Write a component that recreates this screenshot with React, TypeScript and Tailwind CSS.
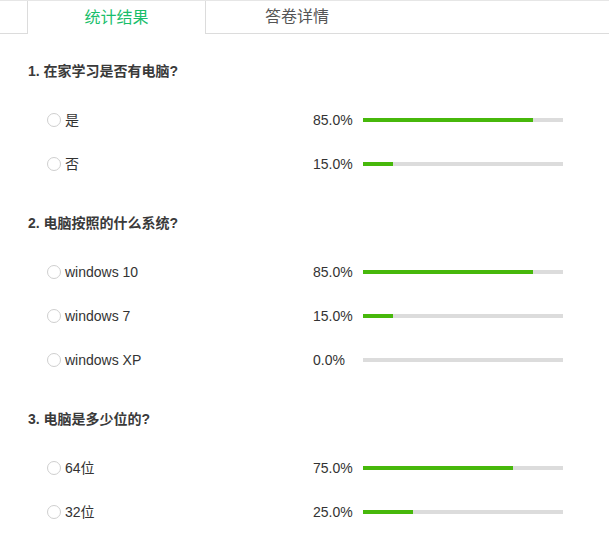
import React, { useState } from 'react';

interface Option {
  label: string;
  percent: number;
}

interface Question {
  title: string;
  options: Option[];
}

const questions: Question[] = [
  {
    title: '1. 在家学习是否有电脑?',
    options: [
      { label: '是', percent: 85 },
      { label: '否', percent: 15 },
    ],
  },
  {
    title: '2. 电脑按照的什么系统?',
    options: [
      { label: 'windows 10', percent: 85 },
      { label: 'windows 7', percent: 15 },
      { label: 'windows XP', percent: 0 },
    ],
  },
  {
    title: '3. 电脑是多少位的?',
    options: [
      { label: '64位', percent: 75 },
      { label: '32位', percent: 25 },
    ],
  },
];

const OptionRow: React.FC<{ option: Option }> = ({ option }) => (
  <div className="flex items-center h-[44px]">
    <div className="flex items-center w-[313px] pl-[47px]">
      <span className="w-[14px] h-[14px] rounded-full border border-[#cfcfcf] bg-white flex-shrink-0"></span>
      <span className="ml-[4px] text-[14px] text-[#333]">{option.label}</span>
    </div>
    <div className="w-[50px] text-[14px] text-[#333]">{option.percent.toFixed(1)}%</div>
    <div className="w-[200px] h-[4px] bg-[#dcdcdc]">
      <div className="h-full bg-[#47b80b]" style={{ width: `${option.percent}%` }}></div>
    </div>
  </div>
);

export default function App() {
  const [tab, setTab] = useState(0);

  return (
    <div
      className="w-[609px] h-[553px] bg-white overflow-hidden"
      style={{ fontFamily: '"Liberation Sans", "Noto Sans CJK SC", sans-serif' }}
    >
      <div className="flex border-t border-[#e6e6e6] h-[34px]">
        <div className="w-[27px] border-b border-[#dcdcdc]"></div>
        <button
          onClick={() => setTab(0)}
          className={`w-[179px] text-[16px] border-l border-r border-[#dcdcdc] ${
            tab === 0 ? 'text-[#19be6b]' : 'text-[#555] border-b'
          }`}
        >
          统计结果
        </button>
        <button
          onClick={() => setTab(1)}
          className={`w-[182px] text-[16px] border-[#dcdcdc] ${
            tab === 1 ? 'text-[#19be6b]' : 'text-[#555] border-b'
          }`}
        >
          答卷详情
        </button>
        <div className="flex-1 border-b border-[#dcdcdc]"></div>
      </div>

      <div className="pt-[27px]">
        {questions.map((q, i) => (
          <div key={i} className={i > 0 ? 'mt-[27px]' : ''}>
            <div className="pl-[28px] text-[14px] leading-[20px] font-bold text-[#3a3a3a]">{q.title}</div>
            <div className="mt-[17px]">
              {q.options.map((opt, j) => (
                <OptionRow key={j} option={opt} />
              ))}
            </div>
          </div>
        ))}
      </div>
    </div>
  );
}
